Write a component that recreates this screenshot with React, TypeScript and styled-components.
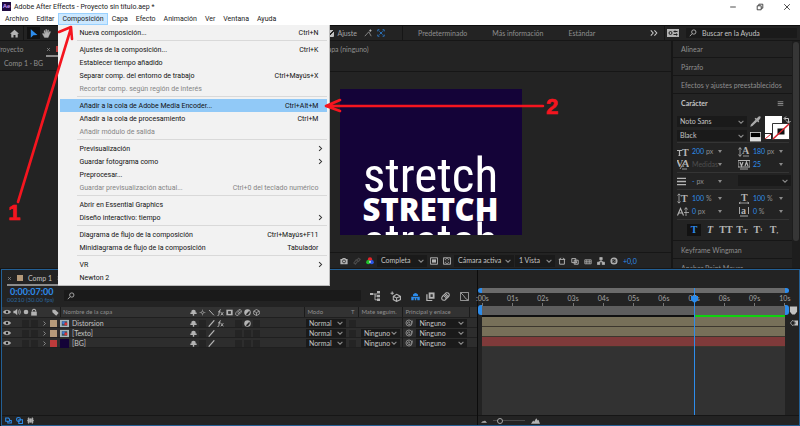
import React from "react";
import styled, { createGlobalStyle, css } from "styled-components";

const C = {
  panel: "#232323",
  line: "#161616",
  field: "#1a1a1a",
  text: "#a3a3a3",
  bright: "#c4c4c4",
  dim: "#8f8f8f",
  blue: "#2d8ceb",
  frame: "#235f94",
  red: "#f5151f",
};

const GlobalStyle = createGlobalStyle`
  * { box-sizing: border-box; }
  body { margin: 0; background: ${C.line}; overflow: hidden; }
  button, input, select { font: inherit; color: inherit; border: 0; padding: 0; margin: 0; background: none; border-radius: 0; outline: 0; }
  ul { list-style: none; margin: 0; padding: 0; }
`;

/* ---------- shell ---------- */

const Page = styled.div`
  position: relative;
  display: grid;
  grid-template-rows: 13px 12px 16px minmax(0, 227fr) minmax(0, 158fr);
  height: 100vh;
  font: 7px/10px Lato, "Open Sans", sans-serif;
  color: ${C.text};
  white-space: nowrap;
`;

const TitleBar = styled.header`
  display: flex;
  align-items: center;
  gap: 3px;
  padding: 0 8px 0 2px;
  background: #fff;
  color: #222;
  font-family: Roboto, "Noto Sans", sans-serif;
`;

const AppBadge = styled.span`
  width: 9px;
  height: 9px;
  background: #1f0a40;
  color: #c99bff;
  font: 700 6px/8px "Liberation Sans", sans-serif;
  text-align: center;
`;

const WindowButtons = styled.div`
  display: flex;
  gap: 17px;
  margin-left: auto;
  button { display: flex; width: 10px; justify-content: center; }
`;

const MenuBar = styled.nav`
  display: flex;
  padding-left: 1px;
  background: #fff;
  color: #222;
  font-family: Roboto, "Noto Sans", sans-serif;
`;

const MenuSlot = styled.div`
  position: relative;
`;

const MenuTitle = styled.button<{ $open?: boolean }>`
  height: 12px;
  padding: 0 3px;
  border: 1px solid transparent;
  line-height: 10px;
  ${p => p.$open && css`background: #cce8ff; border-color: #99d1ff;`}
`;

const MenuList = styled.ul`
  position: absolute;
  z-index: 5;
  top: 12px;
  left: 0;
  width: 272px;
  padding: 1px 2px;
  background: #f2f2f2;
  border-right: 1px solid #bdbdbd;
  border-bottom: 1px solid #bdbdbd;
`;

const MenuItem = styled.button<{ $active?: boolean }>`
  display: flex;
  justify-content: space-between;
  align-items: center;
  width: 100%;
  height: 13px;
  padding: 0 9px 0 19px;
  color: #111;
  background: ${p => (p.$active ? "#91c9f7" : "transparent")};
  &:disabled { color: #858585; }
  svg { margin-right: -6px; }
`;

const MenuRule = styled.li`
  height: 4px;
  margin-left: 17px;
  border-top: 1px solid transparent;
  background: linear-gradient(#d9d9d9, #d9d9d9) 0 0 / 100% 1px no-repeat;
`;

/* ---------- toolbar ---------- */

const Toolbar = styled.div`
  display: grid;
  grid-template-columns: 403px 1fr 136px;
  background: ${C.panel};
  border-top: 1px solid #0e0e0e;
  border-bottom: 1px solid ${C.line};
`;

const ToolGroup = styled.div`
  display: flex;
  align-items: center;
  padding-left: 8px;
  border-right: 1px solid ${C.line};
`;

const ToolButton = styled.button<{ $on?: boolean }>`
  display: flex;
  align-items: center;
  justify-content: center;
  width: 13px;
  height: 12px;
  background: ${p => (p.$on ? "#121212" : "none")};
`;

const Separator = styled.span`
  align-self: stretch;
  width: 1px;
  margin: 0 3px 0 2px;
  background: ${C.line};
`;

const SnapGroup = styled.div`
  display: flex;
  align-items: center;
  gap: 5px;
  margin-left: auto;
  padding-right: 17px;
`;

const SnapLabel = styled.label`
  display: flex;
  align-items: center;
  gap: 3px;
  margin-right: 2px;
  input {
    appearance: none;
    width: 7px;
    height: 7px;
    background: linear-gradient(135deg, transparent 45%, #222 45% 58%, transparent 58%) #c0c0c0;
    border-radius: 1px;
  }
`;

const Workspaces = styled.div`
  display: flex;
  align-items: center;
  gap: 25px;
  padding: 0 6px 0 15px;
  color: ${C.dim};
  svg { margin-left: auto; }
`;

const HelpSearch = styled.div`
  display: flex;
  align-items: center;
  gap: 7px;
  padding: 0 3px 0 2px;
  border-left: 1px solid ${C.line};
`;

const SearchField = styled.label`
  display: flex;
  align-items: center;
  gap: 5px;
  flex: 1;
  min-width: 0;
  height: 10px;
  padding-left: 3px;
  background: ${C.field};
  border-radius: 1px;
  input { flex: 1; min-width: 0; }
  input::placeholder { color: ${C.bright}; opacity: 1; }
`;

/* ---------- middle ---------- */

const Middle = styled.main`
  display: grid;
  grid-template-columns: 190px minmax(0, 1fr) 121px 8px;
  min-height: 0;
`;

const Panel = styled.section`
  display: flex;
  flex-direction: column;
  min-width: 0;
  background: ${C.panel};
  overflow: hidden;
`;

const ProjectPanel = styled(Panel)`
  border-right: 2px solid ${C.line};
  color: ${C.dim};
`;

const ProjectTabs = styled.div`
  display: flex;
  align-items: center;
  height: 16px;
`;

const Tab = styled.button<{ $on?: boolean }>`
  display: flex;
  align-items: center;
  gap: 5px;
  height: 16px;
  padding-top: 2px;
  border-bottom: ${p => (p.$on ? "2px solid #8c8c8c" : "2px solid transparent")};
`;

const ProjectTab = styled(Tab)`
  width: 46px;
  justify-content: flex-start;
  text-indent: -4px;
`;

const Swatch = styled.i<{ $c: string; $s?: number }>`
  display: block;
  width: ${p => p.$s ?? 7}px;
  height: ${p => p.$s ?? 7}px;
  background: ${p => p.$c};
`;

const Crumb = styled.div`
  padding: 1px 4px 2px;
  border-bottom: 1px solid ${C.line};
`;

const ViewerTabs = styled.div`
  height: 31px;
  padding: 3px 0 0 133px;
  border-bottom: 1px solid ${C.line};
  color: ${C.dim};
`;

const Stage = styled.div`
  flex: 1;
  min-height: 0;
  display: flex;
  align-items: center;
  justify-content: center;
`;

const Artboard = styled.div`
  width: 182px;
  height: 146px;
  padding-top: 67px;
  overflow: hidden;
  background: #140338;
  color: #fff;
  text-align: center;
`;

const ThinLine = styled.div`
  font: 49px/40px "Roboto Condensed", "Noto Sans", sans-serif;
`;

const BlackLine = styled.div`
  font: 900 31px/26px "Noto Sans", sans-serif;
`;

const ViewerBar = styled.div`
  display: flex;
  align-items: center;
  gap: 5px;
  height: 16px;
  padding-left: 150px;
  border-top: 1px solid ${C.line};
  color: ${C.bright};
`;

const SelectBox = styled.span<{ $w: number }>`
  position: relative;
  display: inline-flex;
  align-items: center;
  width: ${p => p.$w}px;
  height: 9px;
  background: ${C.field};
  color: ${C.bright};
  select { appearance: none; width: 100%; height: 9px; padding: 0 8px 0 3px; line-height: 9px; }
  svg { position: absolute; right: 3px; pointer-events: none; }
`;

const BarSelect = styled(SelectBox)`
  height: 12px;
  margin: 0 -2px;
  select { height: 12px; padding-left: 4px; }
`;

const BlueValue = styled.span`
  color: ${C.blue};
`;

/* ---------- right sidebar ---------- */

const Sidebar = styled(Panel)`
  border-left: 2px solid ${C.line};
`;

const PanelHeader = styled.button<{ $on?: boolean }>`
  display: flex;
  flex: none;
  align-items: center;
  justify-content: space-between;
  height: 18px;
  padding: 0 8px;
  border-bottom: ${p => (p.$on ? "0" : `1px solid ${C.line}`)};
  color: ${p => (p.$on ? C.bright : C.dim)};
  font-weight: ${p => (p.$on ? 700 : 400)};
  &:first-child { height: 17px; }
`;

const CharacterBody = styled.div`
  display: flex;
  flex: none;
  flex-direction: column;
  padding: 3px 3px 3px 4px;
  border-bottom: 1px solid ${C.line};
`;

const FontRow = styled.div`
  display: grid;
  grid-template-columns: 70px 12px 1fr;
  gap: 3px;
`;

const FontSelects = styled.div`
  display: flex;
  flex-direction: column;
  gap: 3px;
  padding-top: 1px;
`;

const FontSelect = styled(SelectBox)`
  height: 11px;
  select { height: 11px; }
`;

const MiniIcons = styled.div`
  display: flex;
  flex-direction: column;
  gap: 4px;
  padding-top: 1px;
`;

const Metrics = styled.div`
  display: grid;
  grid-template-columns: 61px 1fr;
  row-gap: 1px;
  padding: 2px 0 2px;
  border-top: 1px solid #343434;
`;

const Metric = styled.div<{ $muted?: boolean }>`
  display: grid;
  grid-template-columns: 15px 26px 1fr;
  align-items: center;
  height: 12px;
  color: ${p => (p.$muted ? "#4e4e4e" : C.dim)};
  i { width: 0; border: 2px solid transparent; border-top: 3px solid #8a8a8a; border-bottom: 0; }
`;

const StyleRow = styled.div`
  display: flex;
  padding: 4px 0 1px 10px;
  gap: 2px;
  border-top: 1px solid #343434;
`;

const StyleButton = styled.button<{ $on?: boolean; $italic?: boolean }>`
  width: 14px;
  height: 12px;
  font: ${p => (p.$italic ? "italic " : "")}700 10px/12px "Liberation Serif", serif;
  color: ${p => (p.$on ? C.blue : "#b5b5b5")};
  background: ${p => (p.$on ? "#121212" : "none")};
  small { font-size: 7px; }
`;

const ScrollTrack = styled.div`
  padding: 1px 1px 0;
  background: #1d1d1d;
`;

const ScrollThumb = styled.div`
  height: 88%;
  border-radius: 3px;
  background: #363636;
`;

/* ---------- timeline ---------- */

const Timeline = styled.section`
  display: grid;
  grid-template-columns: minmax(0, 477fr) minmax(0, 321fr);
  margin: 1px 0 0 1px;
  border: 1px solid ${C.frame};
  background: ${C.panel};
`;

const Half = styled.div`
  display: flex;
  flex-direction: column;
  min-width: 0;
`;

const LeftHalf = styled(Half)`
  border-right: 1px solid #0c0c0c;
`;

const TimelineTabs = styled.div`
  display: flex;
  height: 16px;
  padding-left: 5px;
  color: ${C.bright};
`;

const TimelineHead = styled.div`
  display: flex;
  height: 21px;
  padding-left: 5px;
`;

const TimeBlock = styled.div`
  width: 57px;
  padding-top: 1px;
`;

const TimeCode = styled.div`
  padding-left: 3px;
  font: 700 9px/9px Lato, sans-serif;
  color: ${C.blue};
`;

const FrameInfo = styled.div`
  font: 6px/8px Lato, sans-serif;
  color: #2a659b;
`;

const LayerSearch = styled(SearchField)`
  flex: 0 1 297px;
  height: 11px;
  margin-top: 4px;
`;

const HeadIcons = styled.div`
  display: flex;
  align-items: center;
  gap: 10px;
  height: 20px;
  padding-left: 9px;
`;

const IconCluster = styled.div`
  display: flex;
  gap: 6px;
`;

const Layers = styled.table`
  display: block;
  thead, tbody { display: block; }
  th { font-weight: 400; }
`;

const LayerRow = styled.tr<{ $head?: boolean }>`
  display: grid;
  grid-template-columns: 10px 9px 9px 8px 12px 10px 1fr repeat(8, 9px) 43px 43px 11px 44px 67px 8px;
  height: ${p => (p.$head ? 11 : 10)}px;
  background: ${p => (p.$head ? "#323232" : "#2d2d2d")};
  border-bottom: 1px solid #1f1f1f;
  font-size: ${p => (p.$head ? 6 : 7)}px;
  color: ${p => (p.$head ? C.dim : C.bright)};
`;

const Cell = styled.td<{ $mid?: boolean; $rule?: boolean }>`
  display: flex;
  align-items: center;
  gap: 3px;
  padding: 0;
  min-width: 0;
  justify-content: ${p => (p.$mid ? "center" : "flex-start")};
  ${p => p.$rule && css`border-left: 1px solid #1b1b1b; padding-left: 2px;`}
`;

const Slot = styled.i`
  width: 7px;
  height: 7px;
  background: #242424;
`;

const Footer = styled.div`
  display: flex;
  align-items: center;
  gap: 4px;
  height: 10px;
  margin-top: auto;
  padding-left: 3px;
  border-top: 1px solid ${C.line};
`;

const TimeArea = styled(Half)`
  padding-top: 18px;
`;

const TimeGrid = styled.div`
  display: grid;
  flex: 1;
  grid-template-columns: 4px minmax(0, 1fr) 14px;
`;

const Track = styled.div`
  position: relative;
  display: flex;
  flex-direction: column;
  background: #323232;
`;

const Gutter = styled.div`
  display: flex;
  flex-direction: column;
`;

const Cap = styled.i<{ $h: number; $end?: boolean }>`
  width: 4px;
  height: ${p => p.$h}px;
  background: ${C.blue};
  border-radius: ${p => (p.$end ? "0 3px 3px 0" : "3px 0 0 3px")};
`;

const CapGap = styled.i`
  height: 12px;
`;

const GutterIcons = styled.div`
  display: flex;
  flex-direction: column;
  align-items: flex-end;
  gap: 4px;
  margin-top: -9px;
  padding-right: 1px;
`;

const NavBar = styled.div`
  height: 5px;
  background: #6b6b6b;
`;

const Ruler = styled.div`
  display: flex;
  justify-content: space-between;
  height: 13px;
  background: ${C.panel};
`;

const Mark = styled.span`
  display: flex;
  flex-direction: column;
  align-items: center;
  width: 0;
  &::after { content: ""; width: 1px; height: 3px; background: #777; }
`;

const WorkArea = styled.div`
  height: 9px;
  background: #5e5e5e;
`;

const CacheLine = styled.div`
  height: 2px;
  background: linear-gradient(90deg, #111 70%, #0fd20f 70%);
`;

const LayerBar = styled.div<{ $c: string }>`
  height: 10px;
  border-bottom: 1px solid #3c372e;
  background: ${p => p.$c};
`;

const Playhead = styled.div`
  position: absolute;
  top: 0;
  bottom: 0;
  left: 70%;
  width: 1px;
  background: ${C.blue};
  svg { position: absolute; left: -3px; top: 8px; }
`;

const ZoomSlider = styled.input`
  appearance: none;
  width: 32px;
  height: 7px;
  background: linear-gradient(#4a4a4a, #4a4a4a) 0 3px / 100% 1px no-repeat;
  &::-webkit-slider-thumb {
    appearance: none;
    width: 6px;
    height: 6px;
    border: 1px solid #a8a8a8;
    border-radius: 50%;
    background: ${C.panel};
  }
`;

const ZoomFooter = styled(Footer)`
  gap: 6px;
`;

/* ---------- annotations ---------- */

const Annotations = styled.svg`
  position: absolute;
  z-index: 10;
  inset: 0;
  width: 560px;
  height: 240px;
  pointer-events: none;
  path { fill: none; stroke: ${C.red}; stroke-width: 2.6; stroke-linecap: round; stroke-linejoin: round; }
  text { fill: ${C.red}; font: 900 22px "Liberation Sans", sans-serif; stroke: ${C.red}; stroke-width: 0.6; }
`;

/* ---------- icons ---------- */

const G = "#b4b4b4";

const icons: Record<string, React.ReactNode> = {
  home: <path d="M5 .8 0 5.2h1.4V9.4h2.5V6.6h2.2v2.8h2.5V5.2H10z" fill={G} />,
  arrow: <path d="M2 .3v9.500l2.800-2.800 4.600-.2z" fill={C.blue} />,
  hand: <path d="M2.8 9.5 .4 5.2l1-.5 1.5 1.4L2.2 1.9l.9-.2 1 3L4.2.6h1l.3 3.9L6.5 1l.9.1-.4 3.7 1.7-2.2.8.5-1.7 4-1 2.4z" fill={G} stroke={G} strokeWidth=".4" />,
  snapPen: <g stroke="#9a9a9a" fill="none"><path d="M1 9 6 3.5M6 3.5 9 9" /><circle cx="8" cy="2" r="1" fill="#ccc" /></g>,
  snapBox: <g stroke={C.blue} fill="none"><path d="M1 3V1h2M7 1h2v2M9 7v2H7M3 9H1V7" /><path d="m3 3 4 4M7 3 3 7" strokeWidth=".9" /></g>,
  more: <path d="m1 1.8 3 3.2-3 3.2M5.500 1.800l3 3.200-3 3.200" stroke="#c9c9c9" strokeWidth="1.300" fill="none" />,
  search: <g stroke={G} fill="none" strokeWidth="1.1"><circle cx="6" cy="3.800" r="2.700" /><path d="M4 5.800 1 9" /></g>,
  min: <path d="M1.500 5h7" stroke="#222" strokeWidth="1" />,
  restore: <g fill="none" stroke="#222"><path d="M1.500 3.500h5v5h-5z" /><path d="M3.500 3.500v-2h5v5h-2" /></g>,
  close: <path d="m1.500 1.500 7 7M8.500 1.500l-7 7" stroke="#222" strokeWidth="1" />,
  x: <path d="m2 2 6 6M8 2 2 8" stroke="#8a8a8a" strokeWidth="1.500" />,
  down: <path d="m1 3 4 4 4-4" stroke="#8c8c8c" strokeWidth="1.800" fill="none" />,
  right: <path d="m3 1 4 4-4 4" stroke="#9c9c9c" strokeWidth="1.600" fill="none" />,
  sub: <path d="m3 1.500 3.500 3.500L3 8.500" stroke="#333" strokeWidth="1.500" fill="none" />,
  burger: <path d="M1 2.500h8M1 5h8M1 7.500h8" stroke={G} strokeWidth="1" />,
  camera: <g><path d="M.5 2.500h2l1-1.300h3l1 1.300h2v6.500h-9z" fill={G} /><circle cx="5" cy="5.500" r="1.900" fill="none" stroke={C.panel} /></g>,
  ghost: <g stroke="#4a4a4a" fill="none" strokeWidth="1.400"><path d="M1 7.500 4 3.500l2 1.500-3 4zM5 4l2-2.500L9 3 6.500 6" /></g>,
  rgb: <g><circle cx="5" cy="3" r="2.700" fill="#e3262b" /><circle cx="2.800" cy="6.500" r="2.600" fill="#1fc42a" /><circle cx="7.200" cy="6.500" r="2.600" fill="#2a55e8" /><path d="M5 4.500 6.500 7h-3z" fill="#fff" /></g>,
  roi: <g><path d="M.5 1h9v8h-9z" fill="none" stroke={G} strokeWidth="1.200" /><path d="M2.500 3h5v4h-5z" fill={G} /></g>,
  grid: <g><path d="M.5 1h9v8h-9z" fill="none" stroke={G} strokeWidth="1.200" /><path d="m2 2.500 2 1.500M8 2.500 6 4M2 7.500l2-1.500M8 7.500 6 6M4 2h2M4 8h2" stroke={G} /></g>,
  ratio: <g stroke={G} fill="none" strokeWidth="1.200"><path d="M1 3h8M2 3v6h6V3M3.500 1l-1.500 2M6.500 1 8 3" /></g>,
  fast: <g stroke={G} fill="none" strokeWidth="1.200"><path d="M1 2h5v5H1zM4 4h5v5H4z" /><path d="m5.500 5 2 1.500-2 1.500" /></g>,
  bars: <path d="M1 8.500V3.500h8v5zM1 6h8M3.500 3.500v5M6.500 3.500v5" stroke={G} fill="none" />,
  tree: <path d="M3.500.5h3v3h-3zM.5 6.500h3v3h-3zM6.500 6.500h3v3h-3zM5 3.500v2M2 6.500 5 5l3 1.500" stroke={G} fill={G} strokeWidth=".9" />,
  shutter: <g stroke={G} fill="none" strokeWidth="1.700"><circle cx="5" cy="5" r="3.600" /><path d="m5 1.600 2 3M8.300 4.500 5 6.500M5 8.400 3 5.500M1.700 5.500 5 3.500" strokeWidth=".8" /></g>,
  eye: <g><path d="M.3 5C2 2.200 8 2.200 9.700 5 8 7.800 2 7.800.3 5z" fill={G} stroke={G} strokeWidth=".8" /><circle cx="5" cy="5" r="1.600" fill="#222" /></g>,
  speaker: <g><path d="M.5 3.500h2L5.300 1v8L2.500 6.500h-2z" fill={G} /><path d="M6.700 3q1.500 2 0 4M8.200 1.700q2.300 3.300 0 6.600" stroke={G} fill="none" /></g>,
  dot: <circle cx="5" cy="5" r="2.900" fill={G} />,
  lock: <g><path d="M1.500 4.500h7v5h-7z" fill={G} /><path d="M3 4.500V2.800q2-2.600 4 0v1.700" stroke={G} fill="none" strokeWidth="1.300" /></g>,
  tag: <path d="M.5 1h4l5 4.800L6 9.500.500 4.500z" fill={G} />,
  comp: <g><path d="M0 1h10v8H0z" fill="#a9b6bc" /><path d="M2 2.500h6v5H2z" fill="#39525e" /><circle cx="4" cy="4.200" r="1.600" fill="#3c78d8" /><path d="M5 4h3v3H5z" fill="#d33" /></g>,
  shy: <path d="M2 5V2.500Q5 -.5 8 2.500V5h1.500v2H6v2.500H4V7H.5V5z" fill={G} />,
  sun: <g stroke={G}><circle cx="5" cy="5" r="1.600" fill="none" /><path d="M5 1v1.500M5 7.500V9M1 5h1.500M7.500 5H9" /></g>,
  back: <path d="m1.500 1.500 7 7.500" stroke={G} strokeWidth="1.400" />,
  slash: <path d="m1 9.500 8-9" stroke={G} strokeWidth="1.700" />,
  fx: <g stroke={G} fill="none" strokeWidth="1.300"><path d="M5.500 1Q3.800.5 3.500 3L2.500 8.500Q2 10 .8 9.300M1.500 4h3.500M5.500 4.500l3.500 4.500M9 4.500 5.500 9" /></g>,
  film: <g><path d="M.5 1h9v8h-9z" fill={G} /><path d="M3 3h4v4H3z" fill="#333" /></g>,
  blur: <g stroke={G} fill="none" strokeWidth="1.200"><path d="M1.500 5 5.500 1q2.500-.5 3.500 1.200Q9.500 4 8.500 5l-4 4Q2 9.500 1 8 .500 6.500 1.500 5z" /><path d="M3.500 5.500 6.500 2.500M4.500 7 8 3.500" /></g>,
  adjust: <g><circle cx="5" cy="5" r="4.600" fill={G} /><path d="M2.500 8 8 2.200Q9.200 6 6 8.300 4 9 2.500 8z" fill="#2a2a2a" /></g>,
  cube: <path d="M5 .7 9 3v4.200L5 9.400 1 7.200V3zM1 3l4 2.200L9 3M5 5.200v4.200" stroke={G} fill="none" strokeWidth="1.100" />,
  spiral: <g stroke="#9c9c9c" fill="none"><circle cx="5" cy="5" r="3.800" /><path d="M5 5.500Q6.500 5 5.500 3.500 3.500 3 3 5q.5 2.500 3.500 2Q9 5 9.500 2" /></g>,
  flow: <g fill={G}><path d="M0 2h3v2H0zM7 0h3v2.500H7zM7 3.700h3v2.500H7zM7 7.500h3V10H7z" /><path d="M3 3h4M5 3v5.800h2M5 5h2" stroke={G} fill="none" strokeWidth=".9" /></g>,
  cube3: <g stroke={G} fill="none"><path d="M6 3 9.500 4.800v3L6 9.500 3 7.800v-3zM3 4.800l3 1.500 3.500-1.500M6 6.300v3" /><path d="M2 .5v3M.5 2h3" /></g>,
  shyBlue: <g fill={C.blue}><path d="M2.200 4.500V2.800Q5-.8 7.800 2.800v1.700z" /><path d="M.3 5.300h9.400v3.900H7V7H5.800v2.200H4.200V7H3v2.200H.3z" /></g>,
  frames: <g><path d="M3 .5h6.500v7H3z" fill={G} /><path d="M1 2.500v7h6" stroke={G} fill="none" strokeWidth="1.400" /><path d="M5 2.500h2.500v3H5z" fill="#333" /></g>,
  curve: <g stroke={G} fill="none" strokeWidth=".9"><path d="M.5.5h9v9h-9z" /><path d="m1 1 3 3q2 4 5 5" /></g>,
  dropper: <path d="M9.500.5q-1.300-.8-2.300.6L6 2.200 5 1.600l-.8.900 3.300 3.300.9-.8L7.800 4l1.200-1.200Q10 1.600 9.500.500zM5 3.500.8 7.800.3 9.700l1.900-.5L6.500 5z" fill="#aaa" />,
  swatches: <g><path d="M0 1h10v8.500H0z" fill="#ddd" /><path d="M.7 1.700h8.600v3.800H.7z" fill="#000" /></g>,
  marker: <path d="M1 .5h8v6L6.500 9.500h-3L1 6.500z" fill="#c2c2c2" />,
  compBtn: <g><path d="m.5 5 3-3.500L7 5 3.500 8.500z" fill="none" stroke={G} /><path d="M5 2h5v6H5L7.500 5z" fill="#c2c2c2" /></g>,
  stackBlue: <g fill="none" stroke={C.blue} strokeWidth="1.500"><path d="M1 1.500h4L6.500 3v3H1zM4 6v2.500h5V5H6.500" /></g>,
  ringsBlue: <g fill="none" stroke={C.blue} strokeWidth="1.500"><circle cx="3.600" cy="3.600" r="2.800" /><path d="M4 4h5.200v5.200H4z" /></g>,
  braces: <g stroke={G} fill={G}><path d="M3 .8Q1.500.8 1.500 3v1L.5 5l1 1v1q0 2.200 1.500 2.200M7 .8Q8.500.8 8.500 3v1l1 1-1 1v1q0 2.200-1.500 2.200" /><path d="M3.500 2.500h3v5h-3z" /></g>,
  hillS: <path d="M0 8 3.500 5l1.500 1 1.500-2L10 8z" fill={G} />,
  hillL: <path d="M0 8.500 2.500 5l1 1.300L5.800 2.500 7.500 5l.8-.8L10 8.500z" fill={G} />,
  lines: <path d="M0 1.500h10M0 5h10M0 8.500h10" stroke={G} strokeWidth="1.600" />,
  head: <path d="M0 0h10v6L5 10 0 6z" fill={C.blue} />,
};

const IconSvg = styled.svg`
  display: block;
  flex: none;
`;

const Icon = ({ n, s = 8 }: { n: string; s?: number }) => (
  <IconSvg width={s} height={s} viewBox="0 0 10 10" aria-hidden="true">{icons[n]}</IconSvg>
);

const TypeIcon = styled.svg`
  width: 12px;
  height: 11px;
  text { font: 700 10px "Liberation Serif", serif; fill: #b5b5b5; }
  path { stroke: #b5b5b5; fill: none; }
`;

const typeIcons: Record<string, React.ReactNode> = {
  size: <><path d="M0 4.500h5M2.500 4.500V10M1.500 9.500h2" strokeWidth="1.200" /><text x="5" y="10">T</text></>,
  leading: <><text x="4" y="8">A</text><path d="M2 2v8M.5 3.500 2 1.500l1.500 2M.5 8.500 2 10.500l1.500-2M5 10h6" strokeWidth=".8" /></>,
  kern: <><text x="-1" y="8">V</text><text x="5" y="8">A</text><path d="m3 10 5-8M5 10h5" strokeWidth=".8" /></>,
  track: <><path d="M0 1.500h12v6.500H0z" strokeWidth="1" /><path d="m2 3 1.500 4L5 3M7 7l1.500-4L10 7" strokeWidth="1.200" /><path d="M2 10h8" strokeWidth=".9" /></>,
  vscale: <><text x="4" y="9">T</text><path d="M2 1v9M.5 2.500 2 .8l1.500 1.700M.5 8.500 2 10.200l1.500-1.700" strokeWidth=".8" /></>,
  hscale: <><text x="3" y="8">T</text><path d="M1 10h10M2.500 9 1 10l1.500 1M9.500 9l1.500 1-1.500 1" strokeWidth=".8" /></>,
  baseline: <><path d="m.5 9.500 3-7 3 7M1.500 7h4" strokeWidth="1.100" /><path d="M9 2v8M7.500 3.500 9 1.500l1.500 2M7 6.500h5" strokeWidth=".8" /></>,
  tsume: <><text x="3" y="8">a</text><path d="M1.500 1v7M10.500 1v7M2 10h8" strokeWidth=".9" /></>,
};

const Glyph = ({ n }: { n: string }) => <TypeIcon viewBox="0 0 12 11" aria-hidden="true">{typeIcons[n]}</TypeIcon>;

const FillStroke = () => (
  <svg width="26" height="25" viewBox="0 0 26 25" aria-hidden="true">
    <path d="M0 1h17v17H0z" fill="#fff" />
    <path d="M7.500 8.500h17v16h-17z" fill="#fff" stroke="#333" />
    <path d="M12.500 13.500h7v6h-7z" fill="#111" />
    <path d="M8 24 24 9" stroke="#d8202a" strokeWidth="1.500" />
    <path d="M0 19h6v5H0z" fill="#fff" />
    <path d="m0 24 6-5" stroke="#d8202a" />
    <path d="M19.500 3.500h4v4M21 1.500l-2 2 2 2M21.500 6l2 2 2-2" stroke="#c9c9c9" fill="none" />
  </svg>
);

/* ---------- data ---------- */

type Entry = { label: string; keys?: string; off?: boolean; sub?: boolean; active?: boolean } | null;

const compositionMenu: Entry[] = [
  { label: "Nueva composición...", keys: "Ctrl+N" },
  null,
  { label: "Ajustes de la composición...", keys: "Ctrl+K" },
  { label: "Establecer tiempo añadido" },
  { label: "Separar comp. del entorno de trabajo", keys: "Ctrl+Mayús+X" },
  { label: "Recortar comp. según región de interés", off: true },
  null,
  { label: "Añadir a la cola de Adobe Media Encoder...", keys: "Ctrl+Alt+M", active: true },
  { label: "Añadir a la cola de procesamiento", keys: "Ctrl+M" },
  { label: "Añadir módulo de salida", off: true },
  null,
  { label: "Previsualización", sub: true },
  { label: "Guardar fotograma como", sub: true },
  { label: "Preprocesar..." },
  { label: "Guardar previsualización actual...", keys: "Ctrl+0 del teclado numérico", off: true },
  null,
  { label: "Abrir en Essential Graphics" },
  { label: "Diseño interactivo: tiempo", sub: true },
  null,
  { label: "Diagrama de flujo de la composición", keys: "Ctrl+Mayús+F11" },
  { label: "Minidiagrama de flujo de la composición", keys: "Tabulador" },
  null,
  { label: "VR", sub: true },
  { label: "Newton 2" },
];

const menus = ["Archivo", "Editar", "Composición", "Capa", "Efecto", "Animación", "Ver", "Ventana", "Ayuda"];

const layers = [
  { name: "Distorsion", color: "#b59a7a", bar: "#777059", icon: true, fx: true, matte: false },
  { name: "[Texto]", color: "#b59a7a", bar: "#777059", icon: true, fx: false, matte: true },
  { name: "[BG]", color: "#bd3b3b", bar: "#7f3a3a", icon: false, fx: false, matte: true },
];

const seconds = [":00s", "01s", "02s", "03s", "04s", "05s", "06s", "07s", "08s", "09s", "10s"];

type MetricItem = { icon: string; value: string; unit: string; muted?: boolean };

const metrics: MetricItem[][] = [
  [
    { icon: "size", value: "200", unit: "px" },
    { icon: "leading", value: "180", unit: "px" },
    { icon: "kern", value: "", unit: "Medidas", muted: true },
    { icon: "track", value: "25", unit: "" },
  ],
  [
    { icon: "vscale", value: "100", unit: "%" },
    { icon: "hscale", value: "100", unit: "%" },
    { icon: "baseline", value: "0", unit: "px" },
    { icon: "tsume", value: "0", unit: "%" },
  ],
];

/* ---------- parts ---------- */

type PickerProps = { box?: typeof SelectBox; w: number; label: string; value?: string };

const Picker = ({ box: Box = SelectBox, w, label, value = "" }: PickerProps) => (
  <Box $w={w}>
    <select aria-label={label} defaultValue={value}><option>{value}</option></select>
    <Icon n="down" s={6} />
  </Box>
);

const MetricGroup = ({ items }: { items: MetricItem[] }) => (
  <Metrics>
    {items.map(m => (
      <Metric key={m.icon} $muted={m.muted}>
        <Glyph n={m.icon} />
        <span>{m.value && <BlueValue>{m.value} </BlueValue>}{m.unit}</span>
        <i />
      </Metric>
    ))}
  </Metrics>
);

export default function App() {
  return (
    <Page>
      <GlobalStyle />
      <TitleBar>
        <AppBadge>Ae</AppBadge>
        <span>Adobe After Effects - Proyecto sin título.aep *</span>
        <WindowButtons>
          <button aria-label="Minimizar"><Icon n="min" /></button>
          <button aria-label="Restaurar"><Icon n="restore" /></button>
          <button aria-label="Cerrar"><Icon n="close" /></button>
        </WindowButtons>
      </TitleBar>

      <MenuBar>
        {menus.map(m => (
          <MenuSlot key={m}>
            <MenuTitle $open={m === "Composición"}>{m}</MenuTitle>
            {m === "Composición" && (
              <MenuList>
                {compositionMenu.map((e, i) => e === null ? <MenuRule key={i} /> : (
                  <li key={i}>
                    <MenuItem disabled={e.off} $active={e.active}>
                      <span>{e.label}</span>
                      {e.sub ? <Icon n="sub" s={7} /> : <span>{e.keys}</span>}
                    </MenuItem>
                  </li>
                ))}
              </MenuList>
            )}
          </MenuSlot>
        ))}
      </MenuBar>

      <Toolbar>
        <ToolGroup>
          <ToolButton aria-label="Inicio"><Icon n="home" s={9} /></ToolButton>
          <Separator />
          <ToolButton aria-label="Selección" $on><Icon n="arrow" s={9} /></ToolButton>
          <ToolButton aria-label="Mano"><Icon n="hand" s={9} /></ToolButton>
          <SnapGroup>
            <SnapLabel><input type="checkbox" defaultChecked />Ajuste</SnapLabel>
            <Icon n="snapPen" />
            <Icon n="snapBox" />
          </SnapGroup>
        </ToolGroup>
        <Workspaces>
          <button>Predeterminado</button>
          <button>Más información</button>
          <button>Estándar</button>
          <Icon n="more" />
        </Workspaces>
        <HelpSearch>
          <svg width="12" height="8" viewBox="0 0 12 8" aria-hidden="true">
            <path d="M0 0h12v8H0z" fill={G} />
            <circle cx="3.500" cy="4" r="1.500" fill="none" stroke="#222" />
            <path d="M6.500 2.500h4M6.500 5.500h4M8 1.500v2M9.500 4.500v2" stroke="#222" />
          </svg>
          <SearchField><Icon n="search" /><input aria-label="Buscar en la Ayuda" placeholder="Buscar en la Ayuda" /></SearchField>
        </HelpSearch>
      </Toolbar>

      <Middle>
        <ProjectPanel>
          <ProjectTabs>
            <ProjectTab>Proyecto</ProjectTab>
            <Tab $on aria-label="Controles de efectos"><Icon n="x" s={5} /><Swatch $c="#bd3b3b" $s={6} /></Tab>
          </ProjectTabs>
          <Crumb>Comp 1 · BG</Crumb>
        </ProjectPanel>
        <Panel>
          <ViewerTabs>Capa (ninguno)</ViewerTabs>
          <Stage>
            <Artboard>
              <ThinLine>stretch</ThinLine>
              <BlackLine>STRETCH</BlackLine>
              <ThinLine>stretch</ThinLine>
            </Artboard>
          </Stage>
          <ViewerBar>
            <Icon n="camera" />
            <Icon n="ghost" />
            <Icon n="rgb" />
            <Picker box={BarSelect} w={50} label="Resolución" value="Completa" />
            <Icon n="roi" />
            <Icon n="grid" />
            <Picker box={BarSelect} w={60} label="Vista 3D" value="Cámara activa" />
            <Picker box={BarSelect} w={40} label="Vistas" value="1 Vista" />
            <Icon n="ratio" />
            <Icon n="fast" />
            <Icon n="bars" />
            <Icon n="tree" />
            <Icon n="shutter" />
            <BlueValue>+0,0</BlueValue>
          </ViewerBar>
        </Panel>
        <Sidebar>
          <PanelHeader>Alinear</PanelHeader>
          <PanelHeader>Párrafo</PanelHeader>
          <PanelHeader>Efectos y ajustes preestablecidos</PanelHeader>
          <PanelHeader $on>Carácter<Icon n="burger" s={7} /></PanelHeader>
          <CharacterBody>
            <FontRow>
              <FontSelects>
                <Picker box={FontSelect} w={70} label="Fuente" value="Noto Sans" />
                <Picker box={FontSelect} w={70} label="Estilo" value="Black" />
              </FontSelects>
              <MiniIcons><Icon n="dropper" s={11} /><Icon n="swatches" s={11} /></MiniIcons>
              <FillStroke />
            </FontRow>
            <MetricGroup items={metrics[0]} />
            <Metrics>
              <Metric><Icon n="lines" s={9} /><span><BlueValue>-</BlueValue> px</span><i /></Metric>
              <Picker box={FontSelect} w={53} label="Trazo" />
            </Metrics>
            <MetricGroup items={metrics[1]} />
            <StyleRow>
              <StyleButton $on>T</StyleButton>
              <StyleButton $italic>T</StyleButton>
              <StyleButton>TT</StyleButton>
              <StyleButton>T<small>T</small></StyleButton>
              <StyleButton>T<small>¹</small></StyleButton>
              <StyleButton>T<small>,</small></StyleButton>
            </StyleRow>
          </CharacterBody>
          <PanelHeader>Keyframe Wingman</PanelHeader>
          <PanelHeader>Anchor Point Mover</PanelHeader>
        </Sidebar>
        <ScrollTrack><ScrollThumb /></ScrollTrack>
      </Middle>

      <Timeline>
        <LeftHalf>
          <TimelineTabs>
            <Tab $on><Icon n="x" s={5} /><Swatch $c="#b59a7a" $s={6} />Comp 1<Icon n="burger" s={6} /></Tab>
          </TimelineTabs>
          <TimelineHead>
            <TimeBlock>
              <TimeCode>0:00:07:00</TimeCode>
              <FrameInfo>00210 (30.00 fps)</FrameInfo>
            </TimeBlock>
            <LayerSearch><Icon n="search" /><input aria-label="Buscar capas" /></LayerSearch>
            <HeadIcons>
              <Icon n="flow" s={10} />
              <Icon n="cube3" s={11} />
              <IconCluster>
                <Icon n="shyBlue" s={9} />
                <Icon n="frames" s={9} />
                <Icon n="blur" s={9} />
              </IconCluster>
              <Icon n="curve" s={9} />
            </HeadIcons>
          </TimelineHead>
          <Layers>
            <thead>
              <LayerRow $head>
                {["eye", "speaker", "dot", "lock"].map(n => <Cell as="th" $mid key={n}><Icon n={n} s={8} /></Cell>)}
                <Cell as="th" />
                <Cell as="th" $mid><Icon n="tag" s={7} /></Cell>
                <Cell as="th" $rule>Nombre de la capa</Cell>
                {["shy", "sun", "back", "fx", "film", "blur", "adjust", "cube"].map(n => <Cell as="th" $mid key={n}><Icon n={n} s={7} /></Cell>)}
                <Cell as="th" />
                <Cell as="th" $rule>Modo</Cell>
                <Cell as="th" $mid>T</Cell>
                <Cell as="th" $rule>Mate seguim.</Cell>
                <Cell as="th" $rule>Principal y enlace</Cell>
                <Cell as="th" $rule />
              </LayerRow>
            </thead>
            <tbody>
              {layers.map(l => (
                <LayerRow key={l.name}>
                  <Cell $mid><Icon n="eye" s={8} /></Cell>
                  <Cell />
                  <Cell $mid><Slot /></Cell>
                  <Cell $mid><Slot /></Cell>
                  <Cell $mid><Icon n="right" s={5} /></Cell>
                  <Cell><Swatch $c={l.color} /></Cell>
                  <Cell>{l.icon ? <Icon n="comp" s={9} /> : <Swatch $c="#140338" $s={9} />}{l.name}</Cell>
                  <Cell $mid><Icon n="shy" s={7} /></Cell>
                  <Cell $mid><Slot /></Cell>
                  <Cell $mid><Icon n="slash" s={7} /></Cell>
                  <Cell $mid>{l.fx && <Icon n="fx" s={7} />}</Cell>
                  <Cell />
                  <Cell $mid><Slot /></Cell>
                  <Cell $mid>{l.fx ? <Icon n="adjust" s={7} /> : <Slot />}</Cell>
                  <Cell $mid><Slot /></Cell>
                  <Cell />
                  <Cell $mid><Picker w={40} label={`Modo de ${l.name}`} value="Normal" /></Cell>
                  <Cell $mid><Slot /></Cell>
                  <Cell $mid>{l.matte && <Picker w={39} label={`Mate de ${l.name}`} value="Ninguno" />}</Cell>
                  <Cell $rule><Icon n="spiral" s={8} /><Picker w={51} label={`Principal de ${l.name}`} value="Ninguno" /></Cell>
                  <Cell />
                </LayerRow>
              ))}
            </tbody>
          </Layers>
          <Footer>
            <Icon n="stackBlue" s={7} />
            <Icon n="ringsBlue" s={7} />
            <Icon n="braces" s={7} />
          </Footer>
        </LeftHalf>

        <TimeArea>
          <TimeGrid>
            <Gutter><Cap $h={5} /><CapGap /><Cap $h={10} /></Gutter>
            <Track>
              <NavBar />
              <Ruler>{seconds.map(s => <Mark key={s}>{s}</Mark>)}</Ruler>
              <WorkArea />
              <CacheLine />
              {layers.map(l => <LayerBar key={l.name} $c={l.bar} />)}
              <Playhead><Icon n="head" s={7} /></Playhead>
            </Track>
            <Gutter>
              <Cap $h={5} $end /><CapGap /><Cap $h={10} $end />
              <GutterIcons><Icon n="marker" s={9} /><Icon n="compBtn" s={8} /></GutterIcons>
            </Gutter>
          </TimeGrid>
          <ZoomFooter>
            <Icon n="hillS" s={6} />
            <ZoomSlider type="range" aria-label="Zoom de tiempo" defaultValue={12} />
            <Icon n="hillL" s={9} />
          </ZoomFooter>
        </TimeArea>
      </Timeline>

      <Annotations viewBox="0 0 560 240" aria-hidden="true">
        <path d="M18 202 71 28M59 32l12-5 1 12" />
        <path d="M543 106H327M340 100l-14 6 14 5" />
        <text x="8" y="220">1</text>
        <text x="546" y="114">2</text>
      </Annotations>
    </Page>
  );
}
